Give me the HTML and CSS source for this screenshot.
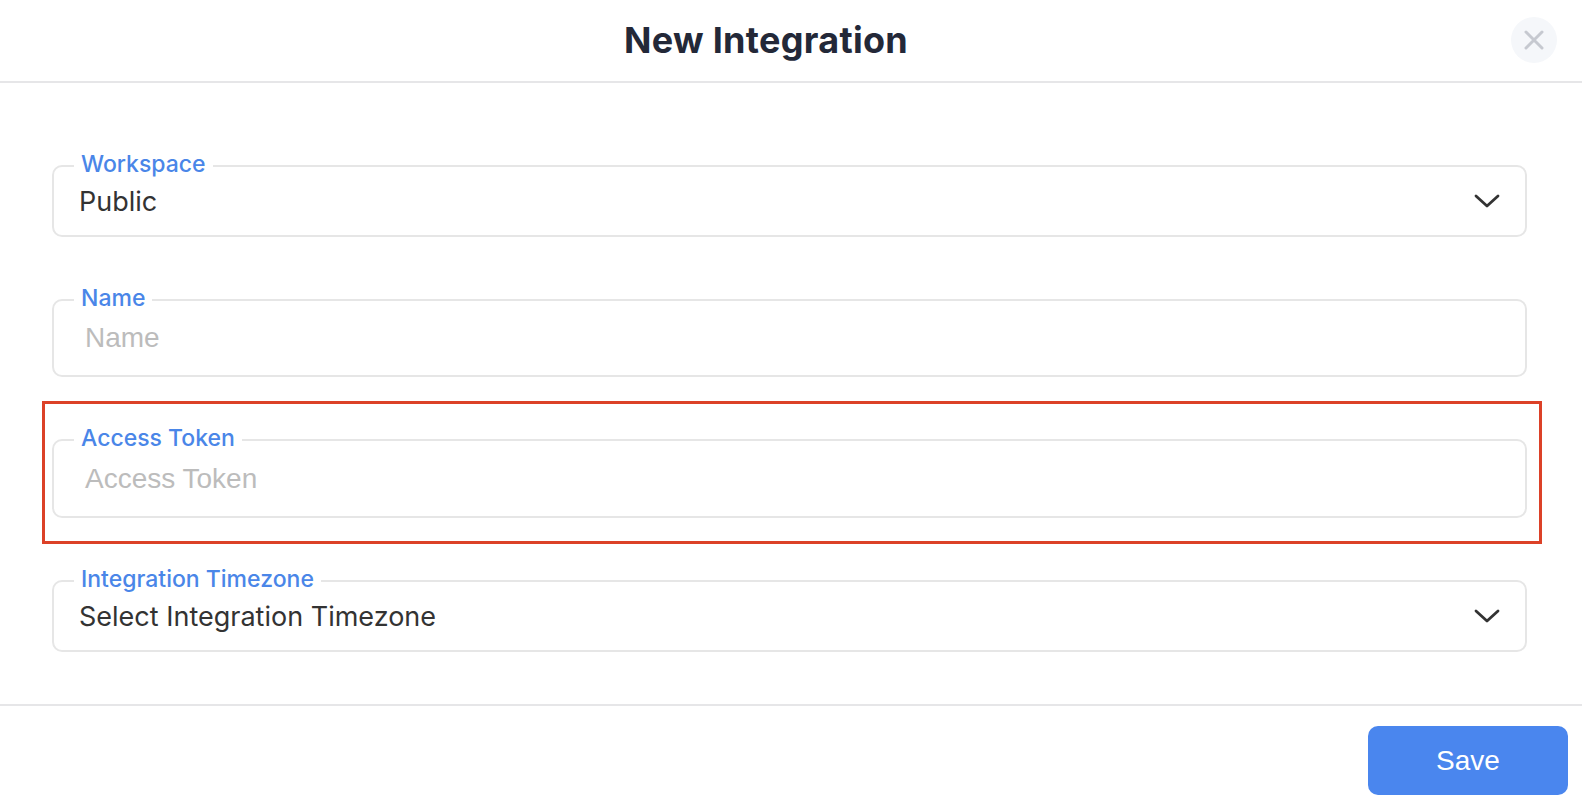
FILE: index.html
```html
<!DOCTYPE html>
<html lang="en">
<head>
<meta charset="utf-8">
<title>New Integration</title>
<link rel="stylesheet" href="styles.css">
</head>
<body>
<div class="modal">
  <header class="modal-header">
    <h1 class="modal-title">New Integration</h1>
    <button class="close-btn" type="button" aria-label="Close">
      <svg width="22" height="22" viewBox="0 0 22 22"><path d="M3 3 L19 19 M19 3 L3 19" stroke="#c6c9d0" stroke-width="3" stroke-linecap="round" fill="none"/></svg>
    </button>
  </header>
  <main class="modal-body">
    <div class="field field-select">
      <span class="field-label">Workspace</span>
      <span class="field-value">Public</span>
      <svg class="chevron" width="26" height="16" viewBox="0 0 26 16"><path d="M2 3 L13 13 L24 3" stroke="#333" stroke-width="2.8" fill="none" stroke-linecap="round" stroke-linejoin="round"/></svg>
    </div>
    <div class="field field-input field-name">
      <span class="field-label">Name</span>
      <span class="placeholder">Name</span>
    </div>
    <div class="field field-input field-token">
      <span class="field-label">Access Token</span>
      <span class="placeholder">Access Token</span>
      <div class="highlight"></div>
    </div>
    <div class="field field-select">
      <span class="field-label">Integration Timezone</span>
      <span class="field-value">Select Integration Timezone</span>
      <svg class="chevron" width="26" height="16" viewBox="0 0 26 16"><path d="M2 3 L13 13 L24 3" stroke="#333" stroke-width="2.8" fill="none" stroke-linecap="round" stroke-linejoin="round"/></svg>
    </div>
  </main>
  <footer class="modal-footer">
    <button class="save-btn" type="button">Save</button>
  </footer>
</div>
</body>
</html>
```
FILE: styles.css
```css
* { box-sizing: border-box; }
html, body { margin: 0; padding: 0; background: #ffffff; }
body { font-family: Inter, "Liberation Sans", sans-serif; color: #333; }

.modal { width: 1582px; height: 812px; display: flex; flex-direction: column; }

.modal-header {
  position: relative;
  height: 83px;
  border-bottom: 2px solid #e6e6e8;
  display: flex;
  align-items: center;
  justify-content: center;
  padding-right: 50px;
}
.modal-title {
  margin: 0;
  margin-top: -2px;
  font-family: Inter, sans-serif;
  font-weight: 700;
  font-size: 36px;
  color: #232838;
  letter-spacing: 0.3px;
}
.close-btn {
  position: absolute;
  right: 25px;
  top: 17px;
  width: 46px;
  height: 46px;
  border-radius: 50%;
  border: none;
  background: #f5f7fa;
  display: flex;
  align-items: center;
  justify-content: center;
  padding: 0;
}

.modal-body {
  padding: 82px 55px 52px 52px;
  display: flex;
  flex-direction: column;
  gap: 62px;
}

.field {
  position: relative;
  border: 2px solid #e6e6e6;
  border-radius: 10px;
  display: flex;
  align-items: center;
}
.field-select { height: 72px; padding: 0 25px; }
.field-name { height: 78px; padding: 0 31px; }
.field-token { height: 79px; padding: 0 31px; }

.field-label {
  position: absolute;
  left: 20px;
  top: -17px;
  padding: 0 7px;
  background: #fff;
  color: #4a86e8;
  font-size: 23px;
  line-height: 28px;
  font-weight: 500;
}
.field-value {
  font-size: 27px;
  color: #333;
  flex: 1;
}
.placeholder {
  font-family: "Liberation Sans", Arial, sans-serif;
  font-size: 28px;
  color: #bcbcbc;
}

.highlight {
  position: absolute;
  left: -12px;
  top: -40px;
  right: -17px;
  bottom: -28px;
  border: 3px solid #dc4128;
  pointer-events: none;
}

.modal-footer {
  border-top: 2px solid #e6e6e8;
  padding: 20px 14px 0 0;
  display: flex;
  justify-content: flex-end;
}
.save-btn {
  width: 200px;
  height: 69px;
  border: none;
  border-radius: 10px;
  background: #4a86ee;
  color: #fff;
  font-family: "Liberation Sans", Arial, sans-serif;
  font-size: 28px;
}
```
